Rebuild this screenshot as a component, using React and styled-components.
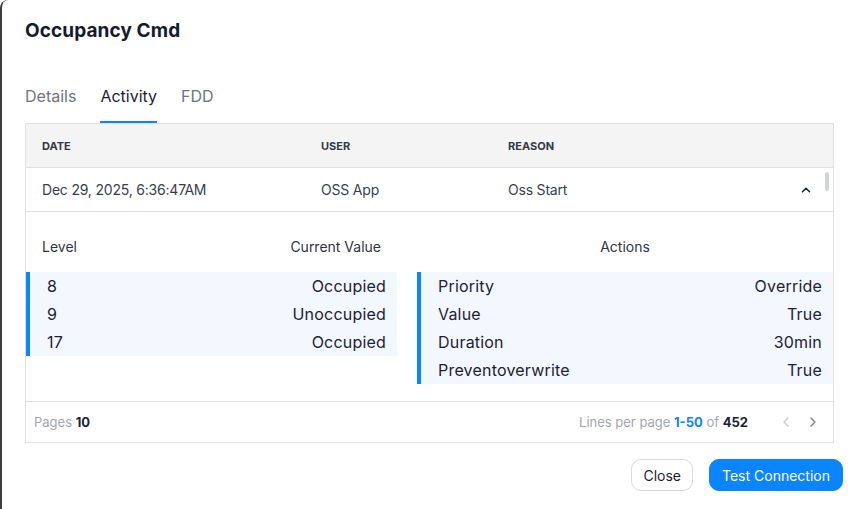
import styled, { createGlobalStyle } from "styled-components";
import { ChevronUp, ChevronLeft, ChevronRight } from "lucide-react";

const GlobalStyle = createGlobalStyle`
    * { box-sizing: border-box; }
    body {
        margin: 0;
        background: #fff;
        font-family: Inter, "Noto Sans", sans-serif;
        color: #1d2233;
    }
`;

const levels = [
    { level: "8", value: "Occupied" },
    { level: "9", value: "Unoccupied" },
    { level: "17", value: "Occupied" },
];

const actions = [
    { name: "Priority", value: "Override" },
    { name: "Value", value: "True" },
    { name: "Duration", value: "30min" },
    { name: "Preventoverwrite", value: "True" },
];

export default function App() {
    return (
        <>
            <GlobalStyle />
            <Modal>
                <Title>Occupancy Cmd</Title>
                <Tabs>
                    <Tab>Details</Tab>
                    <Tab active>Activity</Tab>
                    <Tab>FDD</Tab>
                </Tabs>

                <Table>
                    <HeadRow>
                        <HeadCell>Date</HeadCell>
                        <HeadCell>User</HeadCell>
                        <HeadCell>Reason</HeadCell>
                        <HeadCell />
                    </HeadRow>
                    <Body>
                        <Row>
                            <Cell>Dec 29, 2025, 6:36:47AM</Cell>
                            <Cell>OSS App</Cell>
                            <Cell>Oss Start</Cell>
                            <ToggleCell>
                                <ChevronUp size={14} strokeWidth={2.6} />
                            </ToggleCell>
                        </Row>
                        <Expanded>
                            <Section width="371px">
                                <SectionHead>
                                    <span>Level</span>
                                    <span>Current Value</span>
                                </SectionHead>
                                <Panel>
                                    {levels.map((l) => (
                                        <PanelRow key={l.level + l.value}>
                                            <span>{l.level}</span>
                                            <span>{l.value}</span>
                                        </PanelRow>
                                    ))}
                                </Panel>
                            </Section>
                            <Section width="416px">
                                <SectionHead center>
                                    <span>Actions</span>
                                </SectionHead>
                                <Panel>
                                    {actions.map((a) => (
                                        <PanelRow key={a.name}>
                                            <span>{a.name}</span>
                                            <span>{a.value}</span>
                                        </PanelRow>
                                    ))}
                                </Panel>
                            </Section>
                        </Expanded>
                        <ScrollThumb />
                    </Body>
                    <Footer>
                        <Muted>
                            Pages <Strong>10</Strong>
                        </Muted>
                        <Pager>
                            <Muted>
                                Lines per page <Accent>1-50</Accent> of{" "}
                                <Strong>452</Strong>
                            </Muted>
                            <PageButtons>
                                <ChevronLeft size={16} color="#c9cbd1" />
                                <ChevronRight size={16} color="#7c8090" />
                            </PageButtons>
                        </Pager>
                    </Footer>
                </Table>

                <Actions>
                    <Button>Close</Button>
                    <Button primary>Test Connection</Button>
                </Actions>
            </Modal>
        </>
    );
}

const Modal = styled.div`
    width: 861px;
    height: 509px;
    overflow: hidden;
    background: #fff;
    border-left: 2px solid #3d3d3d;
    border-top-left-radius: 8px;
    padding: 19px 0 0 23px;
`;

const Title = styled.h1`
    margin: 0;
    font-size: 19px;
    line-height: 24px;
    font-weight: 700;
    letter-spacing: 0.1px;
    color: #141a2e;
`;

const Tabs = styled.div`
    display: flex;
    gap: 24px;
    margin-top: 43px;
`;

const Tab = styled.div`
    font-size: 16px;
    line-height: 20px;
    padding-bottom: 15px;
    color: ${(p) => (p.active ? "#1d2233" : "#6f7383")};
    border-bottom: 2px solid ${(p) => (p.active ? "#0a84ff" : "transparent")};
`;

const Table = styled.div`
    width: 809px;
    border: 1px solid #e0e0e0;
`;

const HeadRow = styled.div`
    display: grid;
    grid-template-columns: 279px 187px 1fr 48px;
    height: 44px;
    align-items: center;
    background: #f4f4f4;
    border-bottom: 1px solid #e0e0e0;
`;

const HeadCell = styled.div`
    padding-left: 16px;
    font-size: 11px;
    font-weight: 700;
    text-transform: uppercase;
    color: #343846;
`;

const Body = styled.div`
    position: relative;
    height: 233px;
    overflow: hidden;
`;

const Row = styled.div`
    display: grid;
    grid-template-columns: 279px 187px 1fr 48px;
    height: 44px;
    align-items: center;
    border-bottom: 1px solid #e0e0e0;
`;

const Cell = styled.div`
    padding-left: 16px;
    font-size: 14px;
    letter-spacing: -0.2px;
    color: #3a3e4c;
`;

const ToggleCell = styled.div`
    display: flex;
    align-items: center;
    padding-left: 14px;
    color: #1d2233;
`;

const ScrollThumb = styled.div`
    position: absolute;
    top: 4px;
    right: 4px;
    width: 4px;
    height: 19px;
    border-radius: 2px;
    background: #d2d3d8;
`;

const Expanded = styled.div`
    display: flex;
    gap: 20px;
    padding-top: 20px;
`;

const Section = styled.div`
    width: ${(p) => p.width};
`;

const SectionHead = styled.div`
    display: flex;
    justify-content: ${(p) => (p.center ? "center" : "space-between")};
    height: 28px;
    align-items: center;
    padding: 0 16px;
    margin-bottom: 12px;
    font-size: 14px;
    color: #2f3343;
`;

const Panel = styled.div`
    background: #f3f8fe;
    border-left: 4px solid #0a84ff;
    padding: 0 11px 0 17px;
`;

const PanelRow = styled.div`
    display: flex;
    justify-content: space-between;
    align-items: center;
    height: 28px;
    font-size: 16px;
    letter-spacing: 0.2px;
    color: #1d2233;
`;

const Footer = styled.div`
    display: flex;
    justify-content: space-between;
    align-items: center;
    height: 41px;
    padding: 0 12px 0 8px;
    border-top: 1px solid #e0e0e0;
`;

const Muted = styled.span`
    font-size: 13px;
    color: #a3a6b0;
`;

const Strong = styled.b`
    color: #1d2233;
    font-weight: 700;
`;

const Accent = styled.b`
    color: #0a84ff;
    font-weight: 700;
`;

const Pager = styled.div`
    display: flex;
    align-items: center;
    gap: 30px;
`;

const PageButtons = styled.div`
    display: flex;
    gap: 11px;
    align-items: center;
`;

const Actions = styled.div`
    display: flex;
    justify-content: flex-end;
    gap: 16px;
    width: 818px;
    margin-top: 16px;
`;

const Button = styled.button`
    height: 32px;
    padding: 0 ${(p) => (p.primary ? "12px" : "11px")};
    border-radius: 10px;
    font-family: inherit;
    font-size: 14px;
    border: 1px solid ${(p) => (p.primary ? "#0a84ff" : "#d9d9dc")};
    background: ${(p) => (p.primary ? "#0a84ff" : "#fff")};
    color: ${(p) => (p.primary ? "#fff" : "#1d2233")};
`;
